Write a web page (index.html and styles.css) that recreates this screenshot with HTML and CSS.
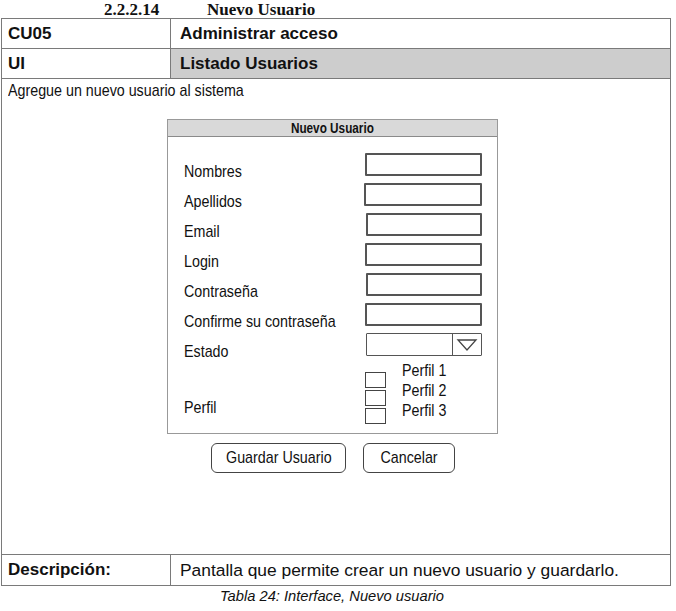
FILE: index.html
```html
<!DOCTYPE html>
<html lang="es">
<head>
  <meta charset="UTF-8" />
  <title>Nuevo Usuario</title>
  <link rel="stylesheet" href="styles.css">
</head>
<body>

  <h3 class="section-title"><span class="num">2.2.2.14</span><span>Nuevo Usuario</span></h3>

  <table class="case-table">
    <colgroup>
      <col class="col-key" />
      <col />
    </colgroup>
    <tr class="row-head">
      <td class="key">CU05</td>
      <td class="key">Administrar acceso</td>
    </tr>
    <tr class="row-head">
      <td class="key">UI</td>
      <td class="key shaded">Listado Usuarios</td>
    </tr>
    <tr class="row-ui">
      <td colspan="2" class="ui-cell">
        <p class="hint"><span class="narrow">Agregue un nuevo usuario al sistema</span></p>

        <!-- mockup of the new user dialog -->
        <div class="mock">
          <div class="panel">
            <div class="panel-title"><span class="narrow center">Nuevo Usuario</span></div>
            <div class="panel-body">
              <div class="field"><span class="label">Nombres</span><span class="box"></span></div>
              <div class="field"><span class="label">Apellidos</span><span class="box shift-l"></span></div>
              <div class="field"><span class="label">Email</span><span class="box shift-r"></span></div>
              <div class="field"><span class="label">Login</span><span class="box"></span></div>
              <div class="field"><span class="label">Contraseña</span><span class="box shift-r"></span></div>
              <div class="field"><span class="label">Confirme su contraseña</span><span class="box"></span></div>
              <div class="field"><span class="label">Estado</span>
                <span class="box select shift-r">
                  <span class="arrow">
                    <svg width="22" height="14" viewBox="0 0 22 14"><path d="M2 2 H20 L11 12 Z" fill="none" stroke="#444" stroke-width="1.3"/></svg>
                  </span>
                </span>
              </div>
              <div class="field perfil">
                <span class="label">Perfil</span>
                <div class="checks">
                  <div class="check-col">
                    <span class="check"></span>
                    <span class="check"></span>
                    <span class="check"></span>
                  </div>
                  <div class="check-labels">
                    <span class="narrow">Perfil 1</span>
                    <span class="narrow">Perfil 2</span>
                    <span class="narrow">Perfil 3</span>
                  </div>
                </div>
              </div>
            </div>
          </div>
          <div class="actions">
            <span class="btn btn-save"><span class="narrow center">Guardar Usuario</span></span>
            <span class="btn btn-cancel"><span class="narrow center">Cancelar</span></span>
          </div>
        </div>
      </td>
    </tr>
    <tr class="row-desc">
      <td class="key">Descripción:</td>
      <td class="desc">Pantalla que permite crear un nuevo usuario y guardarlo.</td>
    </tr>
  </table>

  <p class="caption">Tabla 24: Interface, Nuevo usuario</p>

</body>
</html>
```

FILE: styles.css
```css
body {
  margin: 0;
  font-family: "Liberation Sans", Arial, sans-serif;
  color: #111;
  background: #fff;
}

/* Arial Narrow look-alike, squeezed Liberation Sans */
.narrow {
  display: inline-block;
  white-space: nowrap;
  transform: scaleX(0.84);
  transform-origin: left center;
}

.narrow.center {
  transform-origin: center;
}

.section-title {
  margin: 0;
  height: 18px;
  padding-left: 104px;
  font-family: "Liberation Serif", "Times New Roman", serif;
  font-size: 17px;
  font-weight: bold;
  line-height: 19px;
}

.section-title .num {
  display: inline-block;
  width: 103px;
}

/* main use-case table */
.case-table {
  width: 670px;
  margin-left: 1px;
  border-collapse: collapse;
  table-layout: fixed;
}

.col-key {
  width: 169px;
}

.case-table td {
  border: 1px solid #7a7a7a;
  padding: 0 0 0 6px;
  vertical-align: middle;
}

.row-head td {
  height: 29px;
}

.key {
  font-weight: bold;
  font-size: 17px;
}

.case-table td.key + td.key {
  padding-left: 9px;
}

.shaded {
  background: #cdcdcd;
}

.row-ui td {
  height: 475px;
  vertical-align: top;
  padding: 0;
}

.hint {
  margin: 2px 0 0 6px;
  font-size: 17px;
  line-height: 19px;
}

.mock {
  display: flex;
  flex-direction: column;
  align-items: center;
  margin-top: 19px;
}

.panel {
  width: 329px;
  height: 313px;
  margin-left: -8px;
  border: 1px solid #999;
}

.panel-title {
  height: 16px;
  background: #d9d9d9;
  border-bottom: 1px solid #8a8a8a;
  text-align: center;
  font-weight: bold;
  font-size: 14px;
  line-height: 16px;
}

.panel-body {
  padding: 16px 0 0 16px;
  display: flex;
  flex-direction: column;
  gap: 7px;
}

.field {
  display: grid;
  grid-template-columns: 181px 117px;
  align-items: end;
  height: 23px;
}

.label {
  font-size: 17px;
  line-height: 18px;
  white-space: nowrap;
  transform: translateY(5px) scaleX(0.84);
  transform-origin: left center;
}

.box {
  display: block;
  height: 19px;
  border: 2px solid #555;
  border-radius: 1px;
}

.shift-l {
  margin-left: -1px;
}

.shift-r {
  margin-left: 1px;
}

.select {
  position: relative;
  height: 21px;
  border: 1.5px solid #555;
}

.arrow {
  position: absolute;
  right: 0;
  top: 0;
  bottom: 0;
  width: 28px;
  border-left: 1.5px solid #555;
  display: flex;
  align-items: center;
  justify-content: center;
}

.field.perfil {
  height: auto;
  margin-top: -2px;
}

.field.perfil .label {
  transform: translateY(-7px) scaleX(0.84);
}

.checks {
  display: flex;
  gap: 16px;
}

.check-col {
  display: flex;
  flex-direction: column;
  gap: 2px;
  padding-top: 11px;
}

.check {
  display: block;
  box-sizing: border-box;
  width: 21px;
  height: 16px;
  border: 1.5px solid #444;
}

.check-labels {
  display: flex;
  flex-direction: column;
  align-items: flex-start;
  font-size: 17px;
  line-height: 20px;
}

.actions {
  display: flex;
  gap: 17px;
  margin-top: 9px;
  margin-left: -6px;
}

.btn {
  display: flex;
  align-items: center;
  justify-content: center;
  height: 28px;
  border: 1.5px solid #444;
  border-radius: 6px;
  font-size: 17px;
}

.btn-save {
  width: 133px;
}

.btn-cancel {
  width: 90px;
}

.row-desc td {
  height: 30px;
}

.desc {
  font-size: 17.4px;
  padding-left: 9px !important;
}

.caption {
  margin: 2px 0 0;
  text-align: center;
  font-style: italic;
  font-size: 14.7px;
  padding-right: 12px;
}
```
